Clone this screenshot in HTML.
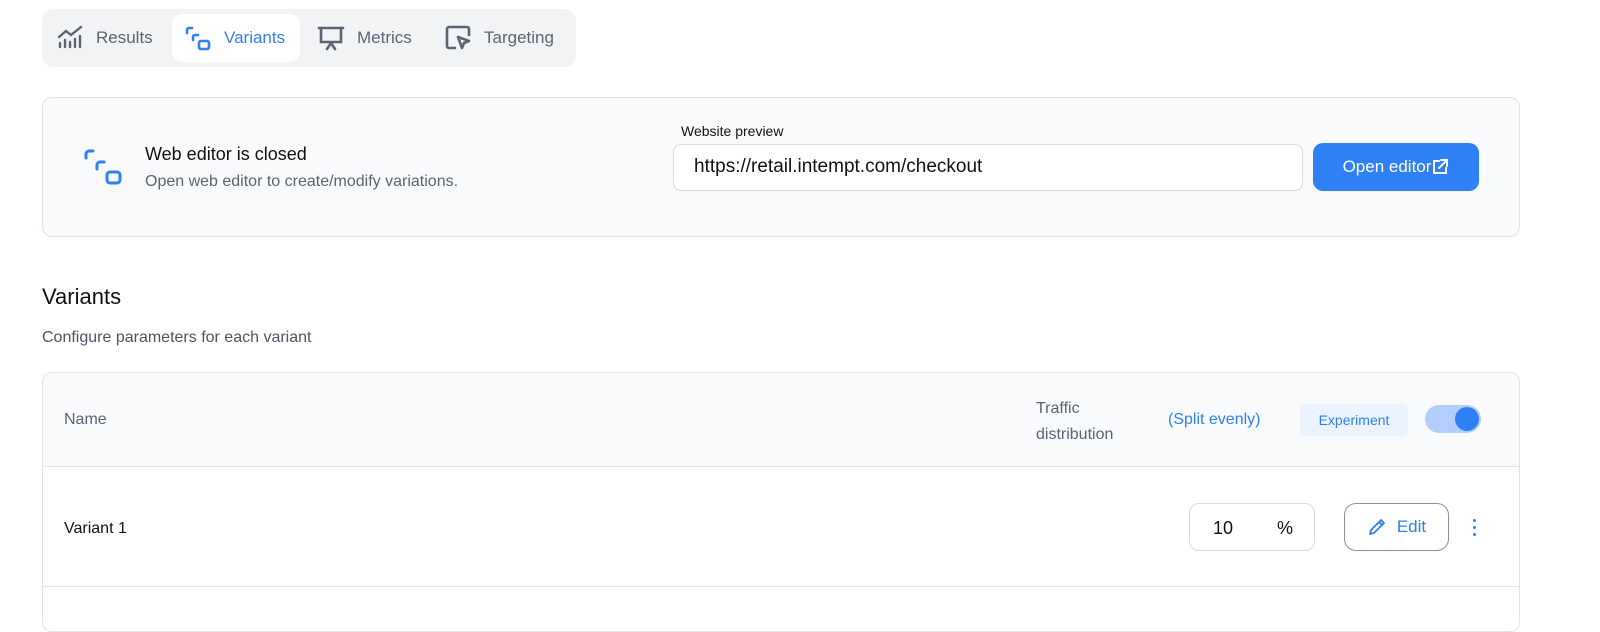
<!DOCTYPE html>
<html><head><meta charset="utf-8"><style>
*{box-sizing:border-box;margin:0;padding:0}
body{width:1600px;height:602px;background:#fff;font-family:"Liberation Sans",sans-serif;position:relative;overflow:hidden;color:#111}
.abs{position:absolute}
.tabs{left:42px;top:9px;width:534px;height:58px;background:#f2f3f5;border-radius:12px}
.tab{position:absolute;top:5px;height:48px;display:flex;align-items:center;font-size:17px;color:#5b6472}
.tab svg{margin-right:12px}
.card{left:42px;top:97px;width:1478px;height:140px;background:#f9fafb;border:1px solid #dfe1e5;border-radius:10px}
</style></head><body>
<div class="abs tabs">
 <div class="tab" style="left:14px"><svg width="28" height="26" viewBox="0 0 28 26" fill="none" stroke="#5b6472" stroke-width="2.4" stroke-linecap="round"><path d="M3 12l7-6 5 4 10-8"/><path d="M4 22v-4M9 22v-7M14 22v-5M19 22v-8M24 22v-11"/></svg>Results</div>
 <div class="tab" style="left:130px;width:128px;background:#fff;border-radius:10px;padding-left:12px;color:#2f7ff5"><svg width="28" height="28" viewBox="0 0 28 28" fill="none" stroke="#2f7ff5" stroke-width="2.6" stroke-linecap="round"><path d="M8 4H5a2 2 0 0 0-2 2v3"/><path d="M14 11h-3a2 2 0 0 0-2 2v3"/><rect x="15" y="17" width="10" height="8" rx="2"/></svg>Variants</div>
 <div class="tab" style="left:275px"><svg width="28" height="28" viewBox="0 0 28 28" fill="none" stroke="#5b6472" stroke-width="2.6" stroke-linecap="round"><path d="M2 4h24"/><path d="M4 4v14h20V4"/><path d="M10 25l4-6 4 6"/></svg>Metrics</div>
 <div class="tab" style="left:402px"><svg width="28" height="28" viewBox="0 0 28 28" fill="none" stroke="#5b6472" stroke-width="2.6" stroke-linejoin="round"><path d="M12 24H5a2 2 0 0 1-2-2V5a2 2 0 0 1 2-2h18a2 2 0 0 1 2 2v7"/><path d="M14 13l11 4-5 2-2 5z"/></svg>Targeting</div>
</div>
<div class="abs card">
 <svg class="abs" style="left:40px;top:50px" width="42" height="40" viewBox="0 0 42 40" fill="none" stroke="#2f7ff5" stroke-width="3" stroke-linecap="round"><path d="M10 3H6a3 3 0 0 0-3 3v4"/><path d="M21 14h-4a3 3 0 0 0-3 3v4"/><rect x="24" y="24" width="13" height="11" rx="3"/></svg>
 <div class="abs" style="left:102px;top:46px;font-size:18px;color:#111">Web editor is closed</div>
 <div class="abs" style="left:102px;top:75px;font-size:16px;color:#5b6472">Open web editor to create/modify variations.</div>
 <div class="abs" style="left:638px;top:25px;font-size:14px;color:#111">Website preview</div>
 <div class="abs" style="left:630px;top:46px;width:630px;height:47px;background:#fff;border:1px solid #d8dbe0;border-radius:8px;font-size:19px;padding:11px 20px;color:#111">https://retail.intempt.com/checkout</div>
 <div class="abs" style="left:1270px;top:45px;width:166px;height:48px;background:#2f7ff5;border-radius:10px;color:#fff;font-size:17px;display:flex;align-items:center;justify-content:center">Open editor<svg width="18" height="18" viewBox="0 0 18 18" fill="none" stroke="#fff" stroke-width="2" stroke-linecap="round"><path d="M8 3H3v12h12v-5"/><path d="M10 2h6v6M16 2l-8 8"/></svg></div>
</div>
<div class="abs" style="left:42px;top:284px;font-size:22px;color:#111">Variants</div>
<div class="abs" style="left:42px;top:329px;font-size:16px;color:#4b5563">Configure parameters for each variant</div>
<div class="abs" style="left:42px;top:372px;width:1478px;height:260px;border:1px solid #e1e3e7;border-radius:10px;overflow:hidden">
 <div class="abs" style="left:0;top:0;width:100%;height:94px;background:#f9fafb;border-bottom:1px solid #e1e3e7"></div>
 <div class="abs" style="left:21px;top:38px;font-size:16px;color:#5b6472">Name</div>
 <div class="abs" style="left:993px;top:23px;font-size:16px;color:#5b6472;line-height:26px">Traffic<br>distribution</div>
 <div class="abs" style="left:1125px;top:38px;font-size:16px;color:#2f7ff5">(Split evenly)</div>
 <div class="abs" style="left:1257px;top:31px;width:108px;height:32px;background:#ebf3ff;border-radius:5px;color:#2f7ff5;font-size:14px;display:flex;align-items:center;justify-content:center">Experiment</div>
 <div class="abs" style="left:1382px;top:32px;width:56px;height:28px;background:#b3cefa;border-radius:14px"><div class="abs" style="right:2px;top:2px;width:24px;height:24px;border-radius:50%;background:#2f7ff5"></div></div>
 <div class="abs" style="left:21px;top:147px;font-size:16px;color:#111">Variant 1</div>
 <div class="abs" style="left:1146px;top:130px;width:126px;height:48px;border:1px solid #d8dbe0;border-radius:10px;font-size:18px"><span class="abs" style="left:23px;top:14px">10</span><span class="abs" style="left:87px;top:14px">%</span></div>
 <div class="abs" style="left:1301px;top:130px;width:105px;height:48px;border:1.5px solid #8a9099;border-radius:12px;color:#2f7ff5;font-size:17px;display:flex;align-items:center;justify-content:center;gap:10px"><svg width="20" height="20" viewBox="0 0 20 20" fill="none" stroke="#2f7ff5" stroke-width="1.8" stroke-linejoin="round"><path d="M3 17l1-4L14 3l3 3L7 16z"/><path d="M12 5l3 3"/></svg>Edit</div>
 <div class="abs" style="left:1430px;top:146px;width:4px;line-height:0"><div style="width:3px;height:3px;border-radius:50%;background:#2f7ff5;margin-bottom:4px"></div><div style="width:3px;height:3px;border-radius:50%;background:#2f7ff5;margin-bottom:4px"></div><div style="width:3px;height:3px;border-radius:50%;background:#2f7ff5"></div></div>
 <div class="abs" style="left:0;top:213px;width:100%;border-top:1px solid #e1e3e7"></div>
</div>
</body></html>
